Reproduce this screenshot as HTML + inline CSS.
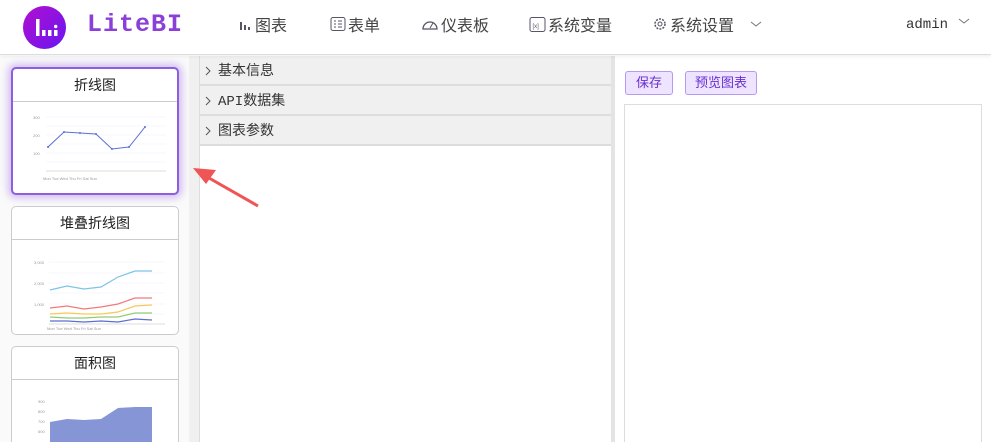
<!DOCTYPE html><html><head><meta charset="utf-8"><style>
*{box-sizing:border-box;margin:0;padding:0}
html,body{width:991px;height:442px;overflow:hidden}
body{background:#fff;font-family:"Liberation Sans","Noto Sans CJK SC",sans-serif;position:relative}
.hdr{position:absolute;left:0;top:0;width:991px;height:55px;border-bottom:1px solid #ddd;box-shadow:0 1px 4px rgba(0,0,0,.08);background:#fff;z-index:2}
.logo{position:absolute;left:23px;top:6px;width:43px;height:43px;border-radius:50%;background:linear-gradient(135deg,#b10fd0,#6a16f0)}
.brand{position:absolute;left:87px;top:10px;font-family:"Liberation Mono",monospace;font-weight:bold;font-size:25px;color:#8a3fd8;letter-spacing:1px}
.nav{position:absolute;top:12px;font-size:16px;color:#444;display:flex;align-items:center;gap:2px}
.side{position:absolute;left:0;top:56px;width:190px;height:386px;background:#fafafa;overflow:hidden}
.sb{position:absolute;left:189px;top:56px;width:11px;height:386px;background:#f0f0f0}
.card{position:absolute;left:11px;width:168px;background:#fff;border:1px solid #ccc;border-radius:5px;overflow:hidden}
.card .t{height:33px;border-bottom:1px solid #ccc;text-align:center;line-height:32px;font-size:14px;color:#222}
.mid{position:absolute;left:199px;top:56px;width:413px;height:386px;border-left:1px solid #ddd;background:#fff}
.row{height:30px;border-bottom:2px solid #ddd;background:#f0f0f0;font-size:14px;color:#333;line-height:28px;padding-left:18px;position:relative}
.row svg{position:absolute;left:5px;top:10px}
.div{position:absolute;left:611px;top:56px;width:4px;height:386px;background:#e4e4e4}
.btn{position:absolute;top:71px;height:24px;border:1px solid #b59af0;background:#eee4ff;border-radius:3px;color:#6a2fd0;font-size:13px;line-height:22px;text-align:center}
</style></head><body>
<div class="hdr">
<div class="logo"><svg width="43" height="43"><rect x="13" y="13" width="3.5" height="17" fill="#fff"/><rect x="19" y="24" width="3.5" height="6" fill="#fff"/><rect x="25" y="24" width="3.5" height="6" fill="#fff"/><rect x="31" y="24" width="3.5" height="6" fill="#fff"/><circle cx="32.7" cy="20.5" r="1.7" fill="#fff"/></svg></div>
<div class="brand">LiteBI</div>
<div class="nav" style="left:239px"><svg width="14" height="14"><rect x="1" y="5" width="2" height="8" fill="#556"/><rect x="5" y="8" width="2" height="5" fill="#556"/><rect x="9" y="10" width="2" height="3" fill="#556"/></svg>图表</div>
<div class="nav" style="left:330px"><svg width="16" height="16"><rect x="1" y="1.5" width="14" height="13" rx="2" fill="none" stroke="#556"/><path d="M4 5h2M8 5h4M4 8h2M8 8h4M4 11h2M8 11h4" stroke="#556"/></svg>表单</div>
<div class="nav" style="left:421px"><svg width="18" height="16"><path d="M2 13a7 7 0 1 1 14 0z" fill="none" stroke="#556" stroke-width="1.3"/><path d="M9 12l3-5" stroke="#556"/></svg>仪表板</div>
<div class="nav" style="left:529px"><svg width="17" height="17"><rect x="1" y="1.5" width="15" height="14" rx="2" fill="none" stroke="#556"/><text x="3.5" y="12" font-size="6" fill="#556">[x]</text></svg>系统变量</div>
<div class="nav" style="left:652px"><svg width="16" height="16"><circle cx="8" cy="8" r="5" fill="none" stroke="#556" stroke-width="1.5" stroke-dasharray="2 1.2"/><circle cx="8" cy="8" r="2" fill="none" stroke="#556"/></svg>系统设置<svg width="12" height="8" style="margin-left:14px"><path d="M1 2l5 4 5-4" fill="none" stroke="#777"/></svg></div>
<div style="position:absolute;left:906px;top:17px;font-family:'Liberation Mono',monospace;font-size:14px;color:#333">admin</div>
<svg style="position:absolute;left:958px;top:18px" width="12" height="8"><path d="M1 1l5 4 5-4" fill="none" stroke="#777"/></svg>
</div>
<div class="side">
<div class="card" style="top:11px;height:128px;border:2px solid #8d5ee0;box-shadow:0 0 8px 3px rgba(160,110,230,.45)">
<div class="t">折线图</div>
<svg width="168" height="90" style="display:block"><g stroke="#eef" stroke-width=".6"><path d="M33 15h120M33 24h120M33 33h120M33 42h120M33 51h120M33 60h120"/></g>
<polyline points="35,45 51,30 67,31 83,32 99,47 116,45 132,25" fill="none" stroke="#5b6fd4" stroke-width="1"/>
<g fill="#5b6fd4"><circle cx="35" cy="45" r="1"/><circle cx="51" cy="30" r="1"/><circle cx="67" cy="31" r="1"/><circle cx="83" cy="32" r="1"/><circle cx="99" cy="47" r="1"/><circle cx="116" cy="45" r="1"/><circle cx="132" cy="25" r="1"/></g>
<g font-size="4" fill="#999"><text x="20" y="17">300</text><text x="20" y="35">200</text><text x="20" y="53">100</text><text x="30" y="78">Mon   Tue   Wed   Thu    Fri    Sat   Sun</text></g>
<path d="M33 69h120" stroke="#bbb" stroke-width=".6"/></svg></div>
<div class="card" style="top:150px;height:129px"><div class="t">堆叠折线图</div>
<svg width="168" height="95" style="display:block"><g stroke="#eef" stroke-width=".6"><path d="M37 22h116M37 33h116M37 43h116M37 53h116M37 64h116M37 74h116"/></g>
<polyline points="38,50 55,46 72,49 89,47 106,37 123,31 140,31" fill="none" stroke="#7cc4e8" stroke-width="1.2"/>
<polyline points="38,68 55,66 72,69 89,67 106,64 123,58 140,58" fill="none" stroke="#f07a7a" stroke-width="1.2"/>
<polyline points="38,74 55,73 72,74 89,74 106,72 123,66 140,65" fill="none" stroke="#fac858" stroke-width="1.2"/>
<polyline points="38,77 55,78 72,78 89,77 106,77 123,73 140,73" fill="none" stroke="#91cc75" stroke-width="1.2"/>
<polyline points="38,81 55,81 72,82 89,81 106,82 123,79 140,80" fill="none" stroke="#5b6fd4" stroke-width="1.2"/>
<path d="M37 84h116" stroke="#bbb" stroke-width=".6"/><g font-size="4" fill="#999"><text x="22" y="24">3,000</text><text x="22" y="45">2,000</text><text x="22" y="66">1,000</text><text x="35" y="90">Mon   Tue   Wed   Thu    Fri    Sat   Sun</text></g></svg></div>
<div class="card" style="top:290px;height:110px"><div class="t">面积图</div>
<svg width="168" height="70" style="display:block"><polygon points="38,42 55,39 72,40 89,39 106,28 123,27 140,27 140,70 38,70" fill="#8595d6"/><g font-size="4" fill="#999"><text x="26" y="23">900</text><text x="26" y="33">800</text><text x="26" y="43">700</text><text x="26" y="53">600</text></g></svg></div>
</div>
<div class="sb"></div>
<div class="mid">
<div class="row"><svg width="6" height="10"><path d="M1 1l4 4-4 4" fill="none" stroke="#555"/></svg>基本信息</div>
<div class="row"><svg width="6" height="10"><path d="M1 1l4 4-4 4" fill="none" stroke="#555"/></svg><span style="font-family:'Liberation Mono','Noto Sans CJK SC',monospace">API数据集</span></div>
<div class="row"><svg width="6" height="10"><path d="M1 1l4 4-4 4" fill="none" stroke="#555"/></svg>图表参数</div></div>
<div class="div"></div>
<div class="btn" style="left:625px;width:48px">保存</div>
<div class="btn" style="left:685px;width:72px">预览图表</div>
<div style="position:absolute;left:624px;top:104px;width:358px;height:340px;border:1px solid #ddd"></div>
<svg style="position:absolute;left:190px;top:160px" width="75" height="50"><path d="M68 46L12 14" stroke="#f05454" stroke-width="3"/><polygon points="3,8 26,10 16,24" fill="#f05454"/></svg>
</body></html>
